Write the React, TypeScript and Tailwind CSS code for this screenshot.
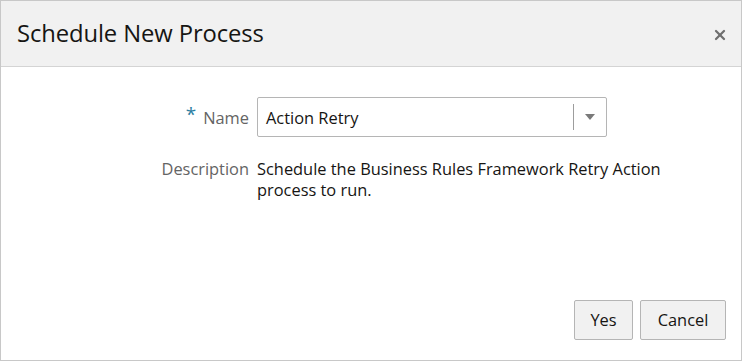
import { X } from "lucide-react";

export default function App() {
  return (
    <div
      className="w-[742px] h-[361px] flex flex-col border border-[#c8c8c8] bg-white text-[#161513]"
      style={{ fontFamily: '"Open Sans", "Noto Sans", sans-serif' }}
    >
      <div className="h-[66px] shrink-0 flex items-center justify-between bg-[#f1f1f1] border-b border-[#d4d4d4] pl-[16px] pr-[13px]">
        <h1 className="text-[23.8px] font-normal tracking-[-0.1px] text-[#161513]">Schedule New Process</h1>
        <X size={16} strokeWidth={3.4} className="text-[#6f6f6f] mt-[2px]" />
      </div>
      <div className="flex-1 flex flex-col pt-[30px]">
        <div className="flex items-center">
          <div className="w-[256px] flex justify-end items-center pr-[8px] text-[16.4px] text-[#646464] mt-[2px]">
            <span className="text-[#2b7ea1] text-[19px] mr-[7px] -mt-[8px]">*</span>
            Name
          </div>
          <div className="w-[350px] h-[40px] flex items-center border border-[#b5b5b5] rounded-[2px] bg-white">
            <span className="flex-1 pl-[8px] text-[16.4px] text-[#161513] mt-[2px]">Action Retry</span>
            <div className="w-px h-[26px] bg-[#9d9d9d]" />
            <div className="w-[32px] flex justify-center">
              <svg width="10" height="6" viewBox="0 0 10 6">
                <path d="M0 0h10L5 6z" fill="#7a7a7a" />
              </svg>
            </div>
          </div>
        </div>
        <div className="flex mt-[21px]">
          <div className="w-[256px] text-right pr-[8px] text-[16.4px] text-[#646464] leading-[21px]">Description</div>
          <div className="w-[430px] text-[16.4px] leading-[21px] text-[#161513]">
            Schedule the Business Rules Framework Retry Action process to run.
          </div>
        </div>
        <div className="mt-auto flex justify-end gap-[7px] pr-[15px] pb-[20px]">
          <button className="h-[40px] w-[59px] border border-[#b5b5b5] rounded-[2px] bg-[#f1f1f1] text-[16.4px] text-[#161513]">Yes</button>
          <button className="h-[40px] w-[86px] border border-[#b5b5b5] rounded-[2px] bg-[#f1f1f1] text-[16.4px] text-[#161513]">Cancel</button>
        </div>
      </div>
    </div>
  );
}
